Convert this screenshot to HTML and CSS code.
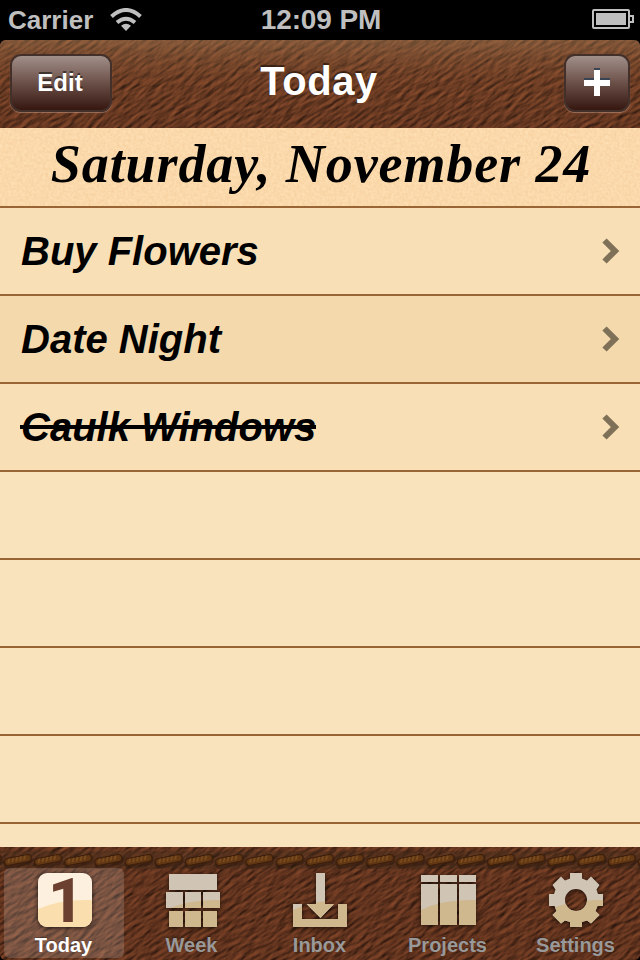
FILE: index.html
```html
<!DOCTYPE html>
<html lang="en">
<head>
<meta charset="utf-8">
<title>Today</title>
<link rel="stylesheet" href="styles.css">
</head>
<body>
<svg class="defs" width="0" height="0" aria-hidden="true">
  <defs>
    <filter id="leather" x="0" y="0" width="100%" height="100%" color-interpolation-filters="sRGB">
      <feTurbulence type="fractalNoise" baseFrequency="0.07 0.25" numOctaves="4" seed="8" result="n"/>
      <feDiffuseLighting in="n" surfaceScale="1.15" diffuseConstant="1" lighting-color="#a05834">
        <feDistantLight azimuth="250" elevation="40"/>
      </feDiffuseLighting>
    </filter>
    <filter id="paper" x="0" y="0" width="100%" height="100%" color-interpolation-filters="sRGB">
      <feTurbulence type="fractalNoise" baseFrequency="0.35" numOctaves="3" seed="3"/>
      <feColorMatrix values="0.04 0 0 0 0.963  0.09 0 0 0 0.805  0.12 0 0 0 0.61  0 0 0 0 1"/>
    </filter>
    <linearGradient id="navShade" x1="0" y1="0" x2="0" y2="1">
      <stop offset="0" stop-color="#a9825a" stop-opacity=".42"/>
      <stop offset=".5" stop-color="#8a5530" stop-opacity=".1"/>
      <stop offset="1" stop-color="#4a2010" stop-opacity=".12"/>
    </linearGradient>
    <pattern id="stitches" x="3" y="4" width="30.2" height="20" patternUnits="userSpaceOnUse">
      <g transform="rotate(-11 15 10)">
        <rect x="0" y="5" width="30" height="11" rx="5" fill="#28130a" opacity=".45"/>
        <rect x="1.500" y="5.500" width="27" height="7" rx="3.500" fill="#623713" stroke="#3a1c09"/>
        <path d="M7 6l-2 4M11 6l-2 4M15 6l-2 4M19 6l-2 4M23 6l-2 4" stroke="#80501f" stroke-width="1.500"/>
      </g>
    </pattern>
    <clipPath id="week"><path d="M3 1h48v16H3zM0 19h17v16H0zM19 19h16v16H19zM37 19h17v16H37zM3 38h14v16H3zM19 38h16v16H19zM37 38h14v16H37z"/></clipPath>
    <clipPath id="inbox"><path d="M23 0h9v31h9L27.500 45 13.500 31H23zM0 31h9v15h36V31h9v23H0z"/></clipPath>
    <clipPath id="projects"><path d="M0 2h17v7H0zM19 2h17v7H19zM38 2h17v7H38zM0 11h17v41H0zM19 11h17v41H19zM38 11h17v41H38z"/></clipPath>
    <clipPath id="gear"><path clip-rule="evenodd" d="M21 0h12v5.500l5 2L42 3.500 50.500 12l-3 4.500 1.500 4.500H54v12h-5.500l-2 5 4 4L42 50.500l-4-3-5 1.500V54H21v-5l-5-1.500-4 3L3.500 42l4-4-2-5H0V21h5l1.500-4.500-3-4.500L12 3.500l4 4 5-2zM27 16a11 11 0 1 0 0 22 11 11 0 0 0 0-22z"/></clipPath>
  </defs>
</svg>
<div class="screen">
  <header class="status">
    <div class="carrier">Carrier
      <svg class="wifi" width="32" height="24" viewBox="0 0 32 24" fill="none" stroke="#bfbfbf" stroke-width="4">
        <path d="M1.500 8.500Q16-4.500 30.500 8.500M7 14.500q9-7.600 18 0"/>
        <path d="M16 23l-5-5.300q5-3.700 10 0z" fill="#bfbfbf" stroke="none"/>
      </svg>
    </div>
    <div class="time">12:09 PM</div>
    <svg class="battery" width="42" height="20" viewBox="0 0 42 20">
      <rect x="1" y="1" width="36" height="18" rx="1" fill="none" stroke="#bfbfbf" stroke-width="2"/>
      <path d="M4 4h30v12H4z" fill="#bfbfbf"/>
      <path d="M38 7h3v6h-3" fill="none" stroke="#bfbfbf" stroke-width="2"/>
    </svg>
  </header>

  <nav class="navbar">
    <svg class="texture" width="640" height="88" viewBox="0 0 640 88">
      <rect x="-100" y="-300" width="900" height="700" filter="url(#leather)" transform="rotate(-33 320 44)"/>
      <rect width="640" height="88" fill="url(#navShade)"/>
    </svg>
    <button class="btn edit">Edit</button>
    <h1>Today</h1>
    <button class="btn add" aria-label="Add">
      <svg width="26" height="28" viewBox="0 0 26 28"><path d="M10 0h6v10h10v6H16v10h-6V16H0v-6h10z" fill="#3a4354"/><path d="M10 2h6v10h10v6H16v10h-6V18H0v-6h10z" fill="#fff"/></svg>
    </button>
  </nav>

  <main>
    <div class="date">
      <svg class="texture" width="640" height="78"><rect width="640" height="78" filter="url(#paper)"/></svg>
      <h2>Saturday, November 24</h2>
    </div>
    <ul class="list">
      <li><span>Buy Flowers</span><svg class="chev" width="18" height="26" viewBox="0 0 18 26"><path d="M2.500 2.500L13 13 2.500 23.500" fill="none" stroke="#7f7058" stroke-width="6"/></svg></li>
      <li class="alt"><span>Date Night</span><svg class="chev" width="18" height="26" viewBox="0 0 18 26"><path d="M2.500 2.500L13 13 2.500 23.500" fill="none" stroke="#7f7058" stroke-width="6"/></svg></li>
      <li><span class="done">Caulk Windows</span><svg class="chev" width="18" height="26" viewBox="0 0 18 26"><path d="M2.500 2.500L13 13 2.500 23.500" fill="none" stroke="#7f7058" stroke-width="6"/></svg></li>
      <li class="empty"></li><li class="empty"></li><li class="empty"></li><li class="empty"></li><li class="empty"></li>
    </ul>
  </main>

  <footer class="tabbar">
    <svg class="texture" width="640" height="113" viewBox="0 0 640 113">
      <rect x="-100" y="-300" width="900" height="700" filter="url(#leather)" transform="rotate(-33 320 56)"/>
      <rect width="640" height="113" fill="#3a1408" opacity=".12"/>
      <rect y="4" width="640" height="18" fill="#3d2c1a" opacity=".35"/>
      <rect y="4" width="640" height="20" fill="url(#stitches)"/>
    </svg>
    <a class="tab active">
      <svg class="icon" width="54" height="54" viewBox="0 0 54 54">
        <rect width="54" height="54" rx="9" fill="#fdf0de"/>
        <path d="M0 36Q22 26 54 27v18a9 9 0 0 1-9 9H9a9 9 0 0 1-9-9z" fill="#fadeae"/>
        <text class="one" x="10" y="49">1</text>
      </svg>
      <span>Today</span>
    </a>
    <a class="tab">
      <svg class="icon nudge" width="54" height="54" viewBox="0 0 54 54"><g clip-path="url(#week)"><path d="M0 0h54v54H0z" fill="#d0c4b5"/><path d="M0 37Q22 26 54 27v27H0z" fill="#cfb78e"/></g></svg>
      <span>Week</span>
    </a>
    <a class="tab">
      <svg class="icon" width="54" height="54" viewBox="0 0 54 54"><g clip-path="url(#inbox)"><path d="M0 0h54v54H0z" fill="#d0c4b5"/><path d="M0 37Q22 26 54 27v27H0z" fill="#cfb78e"/></g></svg>
      <span>Inbox</span>
    </a>
    <a class="tab">
      <svg class="icon" width="55" height="54" viewBox="0 0 55 54"><g clip-path="url(#projects)"><path d="M0 0h55v54H0z" fill="#d0c4b5"/><path d="M0 37Q22 26 55 27v27H0z" fill="#cfb78e"/></g></svg>
      <span>Projects</span>
    </a>
    <a class="tab">
      <svg class="icon" width="54" height="54" viewBox="0 0 54 54"><g clip-path="url(#gear)"><path d="M0 0h54v54H0z" fill="#d0c4b5"/><path d="M0 37Q22 26 54 27v27H0z" fill="#cfb78e"/></g></svg>
      <span>Settings</span>
    </a>
  </footer>
</div>
</body>
</html>
```
FILE: styles.css
```css
* { box-sizing: border-box; }
body { margin: 0; background: #000; font-family: "Liberation Sans", Arial, sans-serif; font-weight: bold; }
h1, h2, ul { margin: 0; padding: 0; }
.defs { position: absolute; }
.screen { width: 640px; height: 960px; display: flex; flex-direction: column; overflow: hidden; }

.status { height: 40px; flex: none; display: grid; grid-template-columns: 1fr auto 1fr; align-items: center; padding: 0 6px 0 8px; color: #bfbfbf; }
.carrier { display: flex; align-items: center; gap: 17px; font-size: 26px; line-height: 40px; }
.time { font-size: 28px; line-height: 38px; letter-spacing: -0.1px; }
.battery { justify-self: end; margin-bottom: 2px; }

.texture { position: absolute; inset: 0; z-index: -1; }
.navbar { height: 88px; flex: none; position: relative; z-index: 0; display: grid; grid-template-columns: 1fr auto 1fr; align-items: center; padding: 0 10px 2px; overflow: hidden; border-radius: 6px 6px 0 0; background: #6b3821; }
.navbar h1 { font-size: 40px; line-height: 44px; letter-spacing: 0.5px; color: #fff; text-shadow: 0 -2px 1px rgba(0,0,0,.5); margin: 0 2px 4px 0; }
.btn { height: 58px; margin: 0; padding: 0; border: 2px solid #44302b; border-radius: 11px; background: linear-gradient(#a18f89, #6b5048 50%, #351710); box-shadow: 0 1px 1px rgba(200,160,140,.55); color: #fff; font: bold 24px "Liberation Sans", Arial, sans-serif; text-shadow: 0 -2px 0 rgba(0,0,0,.5); display: flex; align-items: center; justify-content: center; }
.edit { width: 102px; padding-right: 2px; }
.add { width: 66px; justify-self: end; padding-bottom: 3px; }

main { flex: 1; min-height: 0; overflow: hidden; background: #f8e3bd; }
.date { position: relative; z-index: 0; height: 80px; border-bottom: 2px solid #9a6534; background: #fbd9aa; text-align: center; }
.date h2 { font: italic bold 54px/72px "Palatino Linotype", Palatino, "Palladio", "Liberation Serif", serif; letter-spacing: 0.9px; padding-left: 2px; color: #000; white-space: nowrap; }
.list { list-style: none; }
.list li { height: 88px; border-bottom: 2px solid #9a6534; background: #f8dfb6; display: flex; align-items: center; justify-content: space-between; padding: 0 20px; font-size: 40px; font-style: italic; color: #000; }
.list li.alt { background: #f4d9ac; }
.list li.empty { background: #f8e3bd; }
.list span { padding-left: 1px; }
.done { background: linear-gradient(#000, #000) 0 20px / 100% 4px no-repeat; }

.tabbar { height: 113px; flex: none; position: relative; z-index: 0; display: flex; padding-top: 21px; overflow: hidden; border-radius: 0 0 6px 6px; background: #63311d; }
.tab { flex: 1; height: 90px; margin: 0 4px; padding-top: 5px; display: flex; flex-direction: column; align-items: center; color: #999; font-size: 20px; line-height: 24px; border-radius: 6px; }
.tab span { margin: 6px 1px 0 0; text-shadow: 0 -1px 1px rgba(0,0,0,.3); }
.active { background: rgba(255,255,255,.16); color: #fff; }
.active .icon, .nudge { position: relative; left: 1px; }
.icon { flex: none; overflow: visible; filter: drop-shadow(0 1px 2px rgba(0,0,0,.7)); }
.one { font: 800 62px/1 Roboto, "Liberation Sans", sans-serif; fill: #6b4030; }
```
